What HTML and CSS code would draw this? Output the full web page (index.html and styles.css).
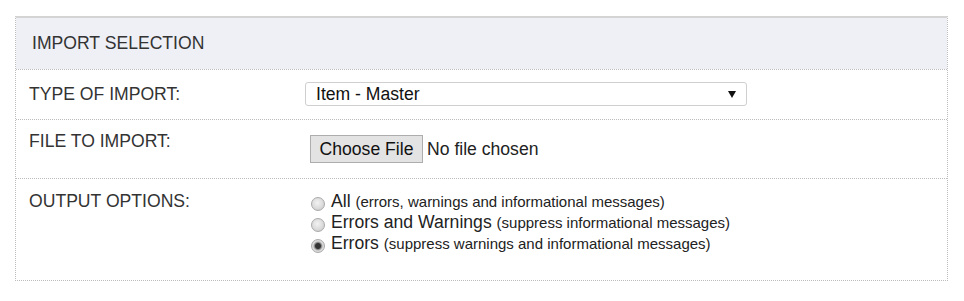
FILE: index.html
```html
<!DOCTYPE html>
<html lang="en">
<head>
    <meta charset="UTF-8">
    <title>Import Selection</title>
    <link rel="stylesheet" href="styles.css">
</head>
<body>

<div class="wrapper">
    <div class="panel">
        <div class="panel-header">IMPORT SELECTION</div>

        <div class="row row-type">
            <div class="label">TYPE OF IMPORT:</div>
            <div class="value">
                <select class="import-select">
                    <option>Item - Master</option>
                    <option>Item - Pricing</option>
                    <option>Customer</option>
                </select>
            </div>
        </div>

        <div class="row row-file">
            <div class="label">FILE TO IMPORT:</div>
            <div class="value">
                <input type="file" class="file-input">
            </div>
        </div>

        <div class="row row-output">
            <div class="label">OUTPUT OPTIONS:</div>
            <div class="value">
                <label class="option"><input type="radio" name="output" class="radio"><span class="option-name">All</span> <span class="hint">(errors, warnings and informational messages)</span></label>
                <label class="option"><input type="radio" name="output" class="radio"><span class="option-name">Errors and Warnings</span> <span class="hint">(suppress informational messages)</span></label>
                <label class="option"><input type="radio" name="output" class="radio" checked><span class="option-name">Errors</span> <span class="hint">(suppress warnings and informational messages)</span></label>
            </div>
        </div>
    </div>
</div>

</body>
</html>
```

FILE: styles.css
```css
body {
    margin: 0;
    padding: 0;
    background-color: #fff;
    font-family: "Liberation Sans", Arial, sans-serif;
    font-size: 17.6px;
    color: #333;
}
.wrapper {
    padding: 16px 16px 0 15px;
}
.panel {
    border: 1px dotted #bdbdbd;
    border-top: 2px solid #d4d4d4;
}
.panel-header {
    background-color: #eff0f6;
    padding: 15px 16px 16px;
    line-height: 20px;
    color: #333;
}
.row {
    display: grid;
    grid-template-columns: 276px 1fr;
    padding-left: 13px;
    border-top: 1px dotted #bdbdbd;
}
.label {
    line-height: 20px;
}
.row-type {
    padding: 12px 0 13px 13px;
}
.row-type .label {
    line-height: 24px;
}
.import-select {
    -webkit-appearance: none;
    appearance: none;
    width: 442px;
    height: 24px;
    padding: 0 0 0 10px;
    border: 1px solid #cfcfcf;
    border-radius: 3px;
    background: #fff url("data:image/svg+xml,%3Csvg xmlns='http://www.w3.org/2000/svg' width='8' height='7'%3E%3Cpath d='M0 0h8L4 7z' fill='%23111'/%3E%3C/svg%3E") no-repeat right 10px center;
    font-family: inherit;
    font-size: 17.6px;
    color: #111;
    display: block;
}
.row-file .label {
    padding-top: 11px;
}
.row-file .value {
    padding: 15px 0 15px;
}
.file-input {
    display: block;
    margin-left: 5px;
    height: 28px;
    font-family: inherit;
    font-size: 17.6px;
    color: #222;
}
.file-input::file-selector-button {
    height: 28px;
    width: 113px;
    margin-right: 4px;
    padding: 0;
    border: 1px solid #adadad;
    border-radius: 0;
    background-color: #e3e3e3;
    font-family: inherit;
    font-size: 17.6px;
    color: #111;
}
.row-output {
    padding: 12px 0 26px 13px;
}
.option {
    display: block;
    height: 21px;
    line-height: 21px;
    color: #222;
    white-space: nowrap;
}
.radio {
    -webkit-appearance: none;
    appearance: none;
    display: inline-block;
    width: 14px;
    height: 14px;
    margin: 0 6px 0 6px;
    vertical-align: -4px;
    border: 1px solid #a9a9a9;
    border-radius: 50%;
    background: radial-gradient(circle at 45% 40%, #f2f2f2 0, #d9d9d9 60%, #c4c4c4 100%);
    box-sizing: border-box;
}
.radio:checked {
    background: radial-gradient(circle, #333 0, #333 2.5px, #8a8a8a 3.5px, #dedede 5px, #c8c8c8 100%);
}
.hint {
    font-size: 15px;
}
```
